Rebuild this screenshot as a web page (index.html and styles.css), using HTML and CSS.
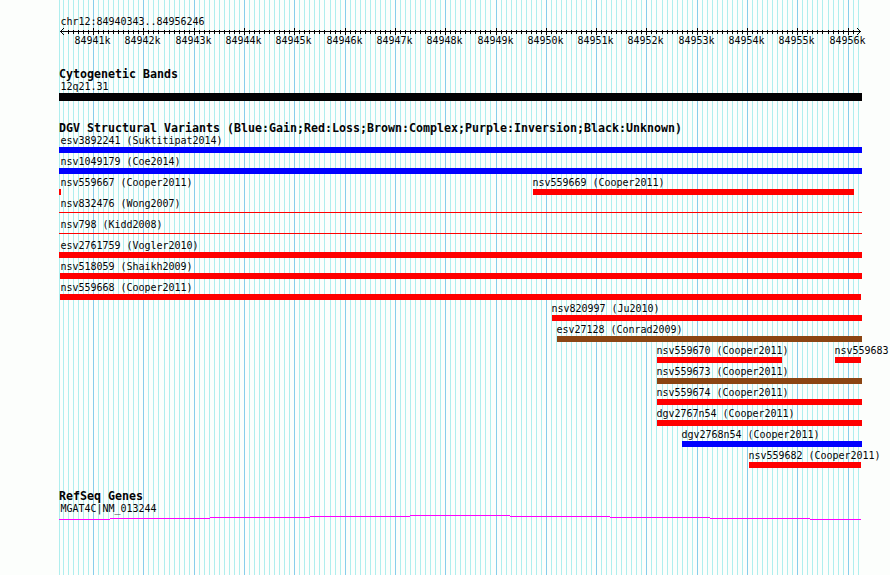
FILE: index.html
```html
<!DOCTYPE html>
<html>
<head>
<meta charset="utf-8">
<title>chr12:84940343..84956246</title>
<link rel="stylesheet" href="styles.css">
</head>
<body>
  <svg id="grid" width="890" height="575"></svg>
  <div id="panel">
    <div class="label region">chr12:84940343..84956246</div>
    <svg id="ruler" width="831" height="20">
      <rect x="1" y="3" width="801" height="1"/>
    </svg>

    <div class="track cytoband">
      <h2>Cytogenetic Bands</h2>
      <div class="row"><div class="feature edge black" style="width:803px"><span class="label">12q21.31</span><i></i></div></div>
    </div>

    <div class="track variants">
      <h2>DGV Structural Variants (Blue:Gain;Red:Loss;Brown:Complex;Purple:Inversion;Black:Unknown)</h2>
      <div class="row"><div class="feature edge gain" style="width:803px"><span class="label">esv3892241 (Suktitipat2014)</span><i></i></div></div>
      <div class="row"><div class="feature edge gain" style="width:803px"><span class="label">nsv1049179 (Coe2014)</span><i></i></div></div>
      <div class="row">
        <div class="feature edge loss" style="width:2px"><span class="label">nsv559667 (Cooper2011)</span><i></i></div>
        <div class="feature loss" style="margin-left:472px;width:321px"><span class="label">nsv559669 (Cooper2011)</span><i></i></div>
      </div>
      <div class="row"><div class="feature edge loss thin" style="width:803px"><span class="label">nsv832476 (Wong2007)</span><i></i></div></div>
      <div class="row"><div class="feature edge loss thin" style="width:803px"><span class="label">nsv798 (Kidd2008)</span><i></i></div></div>
      <div class="row"><div class="feature edge loss" style="width:803px"><span class="label">esv2761759 (Vogler2010)</span><i></i></div></div>
      <div class="row"><div class="feature start loss" style="margin-left:1px;width:802px"><span class="label">nsv518059 (Shaikh2009)</span><i></i></div></div>
      <div class="row"><div class="feature start loss" style="margin-left:1px;width:801px"><span class="label">nsv559668 (Cooper2011)</span><i></i></div></div>
      <div class="row"><div class="feature loss" style="margin-left:493px;width:310px"><span class="label">nsv820997 (Ju2010)</span><i></i></div></div>
      <div class="row"><div class="feature complex" style="margin-left:498px;width:305px"><span class="label">esv27128 (Conrad2009)</span><i></i></div></div>
      <div class="row">
        <div class="feature loss" style="margin-left:598px;width:125px"><span class="label">nsv559670 (Cooper2011)</span><i></i></div>
        <div class="feature loss" style="margin-left:53px;width:26px"><span class="label">nsv559683</span><i></i></div>
      </div>
      <div class="row"><div class="feature complex" style="margin-left:598px;width:205px"><span class="label">nsv559673 (Cooper2011)</span><i></i></div></div>
      <div class="row"><div class="feature loss" style="margin-left:598px;width:205px"><span class="label">nsv559674 (Cooper2011)</span><i></i></div></div>
      <div class="row"><div class="feature loss" style="margin-left:598px;width:205px"><span class="label">dgv2767n54 (Cooper2011)</span><i></i></div></div>
      <div class="row"><div class="feature gain" style="margin-left:623px;width:180px"><span class="label">dgv2768n54 (Cooper2011)</span><i></i></div></div>
      <div class="row"><div class="feature loss" style="margin-left:690px;width:112px"><span class="label">nsv559682 (Cooper2011)</span><i></i></div></div>
    </div>

    <div class="track genes">
      <h2>RefSeq Genes</h2>
      <div class="label region">MGAT4C|NM_013244</div>
      <svg class="intron" width="803" height="6">
        <path d="M0 4.5H51M51 3.5H151M151 2.5H251M251 1.5H351M351 .5H451M451 1.5H551M551 2.5H651M651 3.5H751M751 4.5H802"/>
      </svg>
    </div>
  </div>
  <script>
    var grid = document.getElementById('grid'),
        ruler = document.getElementById('ruler'),
        left = 59;

    function add(parent, name, attrs) {
      var el = document.createElementNS('http://www.w3.org/2000/svg', name);
      for( var a in attrs ) {
        el.setAttribute(a, attrs[a]);
      }
      parent.appendChild(el);
      return el;
    }

    // one line per 100 bp, a darker one per 1000 bp, counted from 84941k
    for( var k = -7; k <= 152; k++ ) {
      var x = Math.max(left, Math.floor(93.6 + k * 5.0302)),
          major = k % 10 === 0;
      add(grid, 'rect', {x: x, y: 0, width: 1, height: 575, 'class': major ? 'major' : 'minor'});
      // the arrowheads take the place of the outermost ticks
      if( k > -6 && k < 152 ) {
        add(ruler, 'rect', {x: x - left, y: major ? 0 : 2, width: 1, height: major ? 7 : 4});
      }
      if( major ) {
        add(ruler, 'text', {x: x - left - 18.5, y: 16}).textContent = (84941 + k / 10) + 'k';
      }
    }

    // arrowheads, one pixel per step
    for( var i = 1; i <= 3; i++ ) {
      [3 - i, 3 + i].forEach(function(y) {
        add(ruler, 'rect', {x: 1 + i, y: y, width: 1, height: 1});
        add(ruler, 'rect', {x: 801 - i, y: y, width: 1, height: 1});
      });
    }
  </script>
</body>
</html>
```
FILE: styles.css
```css
body {
  position: relative;
  width: 890px;
  height: 575px;
  margin: 0;
  overflow: hidden;
  background: #fcfefc;
  color: #040204;
}

#grid {
  position: absolute;
  top: 0;
  left: 0;
  shape-rendering: crispEdges;
}

.minor {fill: #afeeee;}
.major {fill: #87ceeb;}

#panel {
  position: relative;
  width: 831px;
  padding: 15px 0 0 59px;
}

h2 {
  margin: 0;
  font: bold 11.63px/12px "DejaVu Sans Mono", monospace;
  height: 12px;
  white-space: nowrap;
}

.label, #ruler text {
  font: 10px/13px "DejaVu Sans Mono", monospace;
  letter-spacing: -0.02px;
}

.label {
  display: block;
  height: 13px;
  white-space: nowrap;
}

.region {
  margin-left: 1.5px;
}

#ruler {
  display: block;
  fill: #040204;
  shape-rendering: crispEdges;
}

.cytoband {margin-top: 20px;}
.variants {margin-top: 21px;}
.genes {margin-top: 20px;}

.row {
  display: flex;
  height: 21px;
}

.feature {
  flex: none;
}

.feature .label {margin-left: -0.5px;}
.feature.start .label {margin-left: 0.5px;}
.feature.edge .label {margin-left: 1.5px;}

.feature i {
  display: block;
  height: 6px;
}

.cytoband i {height: 8px;}

.feature.thin i {
  height: 1px;
  margin-top: 2px;
}

.black i {background: #040204;}
.gain i {background: #0000ff;}
.loss i {background: #ff0000;}
.complex i {background: #8b4513;}

.intron {
  display: block;
  fill: none;
  stroke: #ff00ff;
  shape-rendering: crispEdges;
}
```
